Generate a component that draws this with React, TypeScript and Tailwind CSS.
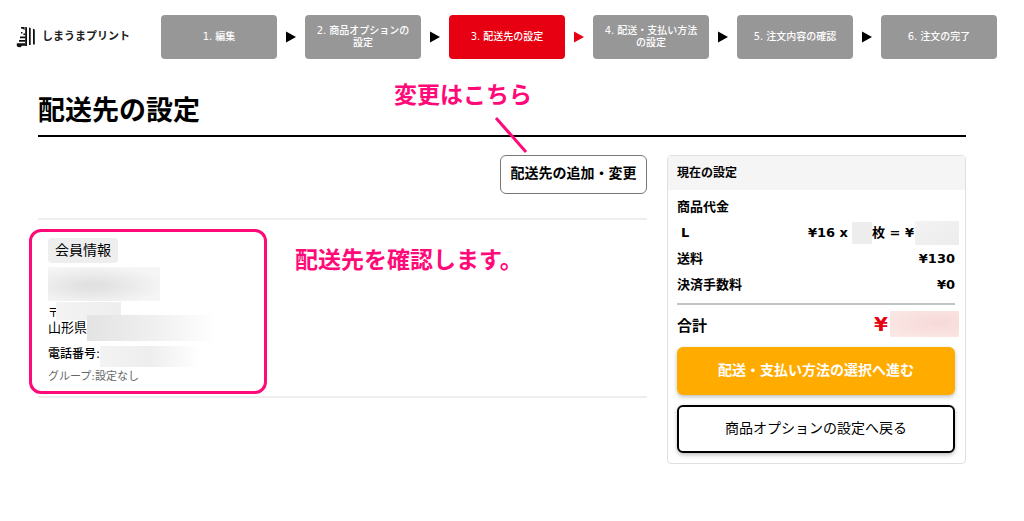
import { Fragment } from 'react';
import clsx from 'clsx';

const steps = [
  { label: '1. 編集' },
  { label: '2. 商品オプションの\n設定' },
  { label: '3. 配送先の設定', current: true },
  { label: '4. 配送・支払い方法\nの設定' },
  { label: '5. 注文内容の確認' },
  { label: '6. 注文の完了' },
];

function Logo() {
  return (
    <a href="#" className="flex items-center gap-1.5 text-[11px] font-bold text-[#222]">
      <svg width="20" height="22" viewBox="0 0 20 22" fill="#111" aria-hidden="true">
        <path d="M9.2 1L11 1.3V20H9.2zM13 1.6l1.7.5V19H13zM17 2.8l1.8.6V18.5H17z" />
        <path d="M5 1h3.6v3L6.6 2.8 5 2.4z" />
        <path d="M5 6h1.4v1.4H5zM7.4 7.4h2v1.5h-2zM4 10.6h5.4v1.7H4zM3 14h6.4v1.7H3zM.8 17.3H9.4v2.4H6L4.5 21.2 2 21 .8 20z" />
      </svg>
      しまうまプリント
    </a>
  );
}

function StepNav() {
  return (
    <ol className="flex flex-1 items-center">
      {steps.map((step, i) => (
        <Fragment key={step.label}>
          <li
            aria-current={step.current ? 'step' : undefined}
            className={clsx(
              'flex h-11 flex-1 items-center justify-center rounded text-center text-[10px] leading-3 font-medium whitespace-pre text-white',
              step.current ? 'bg-[#e60012]' : 'bg-[#979797]'
            )}
          >
            {step.label}
          </li>
          {i < steps.length - 1 && (
            <li aria-hidden="true" className="flex w-7 justify-center">
              <svg width="10" height="12" viewBox="0 0 10 12">
                <path d="M0 0.5v11L10 6z" fill={step.current ? '#e60012' : '#000'} />
              </svg>
            </li>
          )}
        </Fragment>
      ))}
    </ol>
  );
}

// Masked personal data
function Mask({ className }: { className: string }) {
  return <span className={clsx('block shrink-0', className)} />;
}

function AddressCard() {
  return (
    <section className="mt-6 flex items-start border-y-2 border-[#eee] pt-[9px] pb-0.5">
      <div className="-ml-[9px] w-[238px] rounded-xl border-3 border-[#ff0a78] pt-1.5 pr-3 pb-1.5 pl-4">
        <span className="inline-block rounded bg-[#eee] px-[7px] align-top text-sm leading-[25px]">
          会員情報
        </span>
        <Mask className="mt-1 h-[34px] w-28 bg-[radial-gradient(ellipse_at_40%_55%,#e1e1e1_10%,#f5f5f5_75%)]" />
        <div className="mt-px flex">
          <span className="w-2 text-[11px] leading-6">〒</span>
          <Mask className="h-[18px] w-[65px] bg-gradient-to-r from-[#f3f3f3] to-[#eee]" />
        </div>
        <div className="-mt-[11px] flex h-[26px] items-center">
          <span className="text-[13px]">山形県</span>
          <Mask className="h-[26px] w-32 bg-gradient-to-r from-[#e3e3e3] via-[#efefef] to-white" />
        </div>
        <div className="mt-[5px] flex h-[21px]">
          <span className="text-xs leading-4 font-medium">電話番号:</span>
          <Mask className="h-[21px] w-[100px] bg-gradient-to-r from-[#f3f3f3] via-[#eee] to-white" />
        </div>
        <div className="mt-0.5 text-[11px] leading-4 text-[#666]">グループ:設定なし</div>
      </div>
      <p className="mt-[17px] ml-7 text-[23px] leading-7 font-bold text-[#ff0a78]">
        配送先を確認します。
      </p>
    </section>
  );
}

function Summary() {
  return (
    <aside className="w-[299px] shrink-0 rounded border border-[#e0e0e0]">
      <h2 className="bg-[#f5f5f5] px-[9px] text-xs leading-[34px] font-bold">現在の設定</h2>
      <div className="pt-1 pr-[10px] pb-[10px] pl-[9px]">
        <dl className="text-[13px] leading-[26px] font-bold">
          <dt>商品代金</dt>
          <div className="flex justify-between">
            <dt className="pl-1">L</dt>
            <dd className="-mr-1 flex items-center">
              ¥16 x
              <Mask className="ml-1 h-[22px] w-5 bg-[#ededed]" />
              枚 = ¥
              <Mask className="ml-px h-6 w-11 bg-gradient-to-br from-[#f3f3f3] to-[#ececec]" />
            </dd>
          </div>
          <div className="flex justify-between">
            <dt>送料</dt>
            <dd>¥130</dd>
          </div>
          <div className="flex justify-between">
            <dt>決済手数料</dt>
            <dd>¥0</dd>
          </div>
        </dl>
        <div className="mt-[5px] flex h-11 items-center justify-between border-t-2 border-[#c4c4c4] font-bold">
          <span className="text-[15px]">合計</span>
          <span className="-mr-1 flex items-center gap-0.5 pb-1 text-xl leading-6 text-[#e60012]">
            ¥
            <Mask className="h-[26px] w-[69px] bg-[radial-gradient(ellipse_at_70%_45%,#f6d9d9,#fbeae7)]" />
          </span>
        </div>
        <button
          type="button"
          className="h-12 w-full rounded-md bg-[#ffab00] pb-0.5 text-sm font-bold text-white shadow-[0_2px_4px_rgba(0,0,0,0.25)]"
        >
          配送・支払い方法の選択へ進む
        </button>
        <button
          type="button"
          className="mt-[10px] h-12 w-full rounded-md border-2 border-black bg-white pb-0.5 text-sm shadow-[0_2px_4px_rgba(0,0,0,0.25)]"
        >
          商品オプションの設定へ戻る
        </button>
      </div>
    </aside>
  );
}

export default function App() {
  return (
    <div className="min-h-screen bg-white font-['DejaVu_Sans','Noto_Sans_CJK_JP',sans-serif] text-black">
      <header className="flex items-center gap-[31px] pt-[15px] pr-[27px] pl-4">
        <Logo />
        <StepNav />
      </header>

      <main className="pt-8 pr-[58px] pl-[38px]">
        <h1 className="border-b-2 border-black pb-1 text-[27px] leading-10 font-bold">配送先の設定</h1>
        <div className="mt-[18px] flex items-start gap-5">
          <div className="min-w-0 flex-1">
            <div className="flex justify-end">
              <div className="relative">
                <button
                  type="button"
                  className="h-[39px] w-[147px] rounded-md border border-[#777] bg-white pb-1 text-sm font-bold"
                >
                  配送先の追加・変更
                </button>
                <p className="absolute -top-[74px] -left-[106px] text-[23px] leading-7 font-bold whitespace-nowrap text-[#ff0a78]">
                  変更はこちら
                </p>
                <svg
                  className="absolute -top-[39px] -left-[6px]"
                  width="36"
                  height="38"
                  viewBox="0 0 36 38"
                  aria-hidden="true"
                >
                  <path d="M2 2l30 34" stroke="#ff0a78" strokeWidth="3" />
                </svg>
              </div>
            </div>
            <AddressCard />
          </div>
          <Summary />
        </div>
      </main>
    </div>
  );
}
